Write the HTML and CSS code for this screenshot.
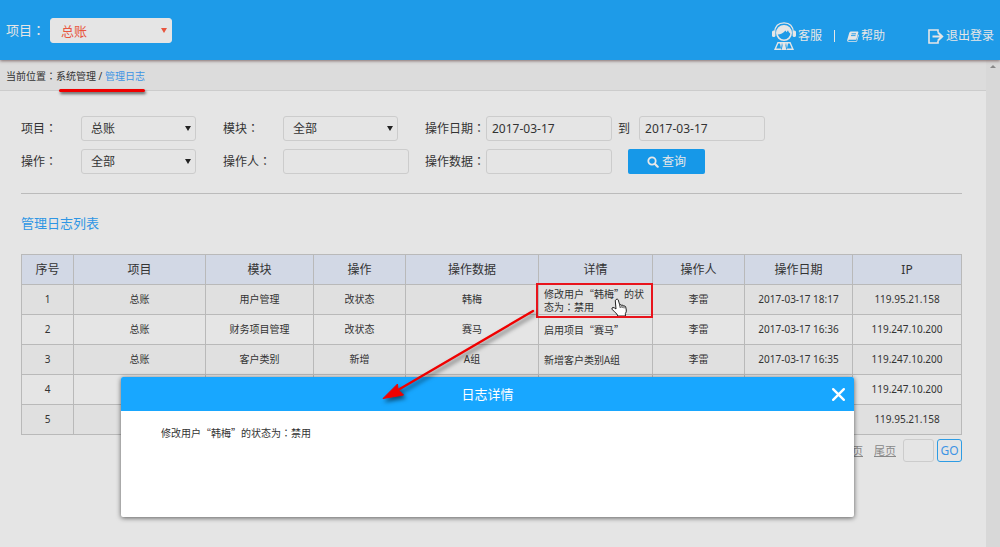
FILE: index.html
```html
<!DOCTYPE html>
<html lang="zh-CN">
<head>
<meta charset="utf-8">
<title>管理日志</title>
<link rel="stylesheet" href="styles.css">
</head>
<body>
<header class="topbar">
  <div class="project">
    <label for="top-project">项目<span class="colon" lang="zh-TW">：</span></label>
    <span class="pick pick-top"><select id="top-project"><option>总账</option></select></span>
  </div>
  <nav class="tools">
    <a href="#" class="tool">
      <svg class="agent" viewBox="0 0 24 28" aria-hidden="true">
        <path d="M2.500 10.500C3 4 7 .9 12 .9s9 3.100 9.500 9.600" fill="none" stroke="#e6e6e6" stroke-width="1.300"/>
        <circle cx="12" cy="11" r="7.200" fill="none" stroke="#e6e6e6" stroke-width="1.600"/>
        <path d="M5 12.500c3 .3 6-.8 8.500-4l1 1.800 1.500-2c.5 2 1.500 3 3.200 3.700C20 6.500 16 3.700 12 3.700S4 7.500 5 12.500z" fill="#e6e6e6"/>
        <rect x="0" y="8.500" width="3.400" height="6.500" rx="1.600" fill="#e6e6e6"/>
        <rect x="20.600" y="8.500" width="3.400" height="6.500" rx="1.600" fill="#e6e6e6"/>
        <path d="M5.500 20h13L22 28H2z" fill="#e6e6e6"/>
        <path d="M6.300 21.500h1.700l1 5H4.200zM17.700 21.500H16l-1 5h4.800zM10 20.500l.6 3-.8 4h-.9zM14 20.500l-.6 3 .8 4h.9z" fill="#1e9be8"/>
      </svg>
      <span>客服</span>
    </a>
    <span class="bar"></span>
    <a href="#" class="tool">
      <svg class="book" viewBox="0 0 12 11" aria-hidden="true">
        <path d="M3.700 .5h7.200q.7 0 .5.700L9.500 8q-.2.700-.8.700H2q-.8 0-.8.600t.7.600h7.500l1.800-6.400q.9.300.6 1.100l-1.600 5.500q-.2.700-.9.700H1.500Q0 10.800.2 9L2.200 2Q2.600.6 3.700.5z" fill="#e6e6e6"/>
        <path d="M4.500 2.800h4.500M4 4.600h4.500" stroke="#1e9be8" stroke-width=".9"/>
      </svg>
      <span>帮助</span>
    </a>
    <a href="#" class="tool tool-exit">
      <svg class="exit" viewBox="0 0 16 15" aria-hidden="true">
        <path d="M10 3.500V1H1v13h9v-2.500" fill="none" stroke="#e6e6e6" stroke-width="1.600"/>
        <path d="M4.500 7.500H14M10 3.500l4.200 4-4.200 4" fill="none" stroke="#e6e6e6" stroke-width="2"/>
      </svg>
      <span>退出登录</span>
    </a>
  </nav>
</header>

<div class="frame">
  <main class="page">
    <div class="crumbs">
      <span>当前位置<span class="colon" lang="zh-TW">：</span></span>
      <span class="trail">系统管理 / <a href="#">管理日志</a><i class="underline"></i></span>
    </div>

    <div class="content">
      <form class="filters">
        <label for="f-project">项目<span class="colon" lang="zh-TW">：</span></label>
        <span class="pick"><select id="f-project"><option>总账</option></select></span>
        <label for="f-module">模块<span class="colon" lang="zh-TW">：</span></label>
        <span class="pick"><select id="f-module"><option>全部</option></select></span>
        <label for="f-from">操作日期<span class="colon" lang="zh-TW">：</span></label>
        <div class="range">
          <input id="f-from" type="text" value="2017-03-17">
          <label class="to" for="f-to">到</label>
          <input id="f-to" type="text" value="2017-03-17">
        </div>

        <label for="f-action">操作<span class="colon" lang="zh-TW">：</span></label>
        <span class="pick"><select id="f-action"><option>全部</option></select></span>
        <label for="f-user">操作人<span class="colon" lang="zh-TW">：</span></label>
        <input id="f-user" type="text">
        <label for="f-data">操作数据<span class="colon" lang="zh-TW">：</span></label>
        <div class="range">
          <input id="f-data" type="text">
          <button type="button" class="search">
            <svg viewBox="0 0 12 12" aria-hidden="true"><circle cx="5" cy="5" r="3.700" fill="none" stroke="#e8e8e8" stroke-width="1.800"/><path d="M7.800 7.800l2.900 2.900" stroke="#e8e8e8" stroke-width="2.200" stroke-linecap="round"/></svg>
            <span>查询</span>
          </button>
        </div>
      </form>

      <h2 class="list-title">管理日志列表</h2>

      <table class="log">
        <colgroup>
          <col class="w-no"><col class="w-project"><col class="w-module"><col class="w-action"><col class="w-data"><col class="w-detail"><col class="w-user"><col class="w-date"><col class="w-ip">
        </colgroup>
        <thead>
          <tr><th>序号</th><th>项目</th><th>模块</th><th>操作</th><th>操作数据</th><th>详情</th><th>操作人</th><th>操作日期</th><th>IP</th></tr>
        </thead>
        <tbody>
          <tr>
            <td>1</td><td>总账</td><td>用户管理</td><td>改状态</td><td>韩梅</td>
            <td class="detail marked">修改用户“韩梅”的状态为<span class="colon" lang="zh-TW">：</span>禁用
              <svg class="hand" viewBox="0 0 16 19" aria-hidden="true">
                <path d="M5 1.500q1.300-1 2.200.3l1.500 5q1.400-.7 2 .5 1.500-.6 2 .6 1.500-.3 2 1l.6 3.100q.3 2-.9 3.500V18H6.800L5.900 16Q3.500 14 1 11.200q-.5-1.500 1-1.700 1.400 0 3 1.500L4.300 3q-.1-1 .7-1.500z" fill="#fff" stroke="#222" stroke-width="1"/>
                <path d="M8.700 7l.6 3M10.800 7.500l.4 2.500M12.800 8.300l.3 2" stroke="#222" stroke-width=".9"/>
              </svg>
              <svg class="arrow" viewBox="0 0 160 100" aria-hidden="true">
                <path d="M153 5L18 84" stroke="#f00000" stroke-width="2.400" stroke-linecap="round"/>
                <path d="M3 92.500L17.500 78 18 83.500 23.500 89z" fill="#f00000" stroke="#f00000" stroke-width="1"/>
              </svg>
            </td>
            <td>李雷</td><td>2017-03-17 18:17</td><td>119.95.21.158</td>
          </tr>
          <tr>
            <td>2</td><td>总账</td><td>财务项目管理</td><td>改状态</td><td>赛马</td>
            <td class="detail">启用项目“赛马”</td>
            <td>李雷</td><td>2017-03-17 16:36</td><td>119.247.10.200</td>
          </tr>
          <tr>
            <td>3</td><td>总账</td><td>客户类别</td><td>新增</td><td>A组</td>
            <td class="detail">新增客户类别A组</td>
            <td>李雷</td><td>2017-03-17 16:35</td><td>119.247.10.200</td>
          </tr>
          <tr><td>4</td><td></td><td></td><td></td><td></td><td></td><td></td><td></td><td>119.247.10.200</td></tr>
          <tr><td>5</td><td></td><td></td><td></td><td></td><td></td><td></td><td></td><td>119.95.21.158</td></tr>
        </tbody>
      </table>

      <div class="pager">
        <a href="#">下一页</a>
        <a href="#">尾页</a>
        <input type="text" aria-label="页码">
        <button type="button">GO</button>
      </div>
    </div>
  </main>
  <div class="scroll"><i></i></div>
</div>

<section class="dialog" role="dialog" aria-labelledby="dialog-title">
  <div class="dialog-head">
    <h3 id="dialog-title">日志详情</h3>
    <button type="button" aria-label="关闭"><svg viewBox="0 0 14 14" aria-hidden="true"><path d="M2 2l10 10M12 2L2 12" stroke="#fff" stroke-width="2.200" stroke-linecap="round"/></svg></button>
  </div>
  <p>修改用户“韩梅”的状态为<span class="colon" lang="zh-TW">：</span>禁用</p>
</section>
</body>
</html>
```
FILE: styles.css
```css
* { box-sizing: border-box; }
body {
  margin: 0;
  min-height: 100vh;
  display: flex;
  flex-direction: column;
  background: #e5e5e5;
  color: #333;
  font: 12px/18px "Noto Sans", "Noto Sans CJK SC", sans-serif;
}
a { color: inherit; text-decoration: none; }
svg { display: block; }
input, select, button { font: inherit; color: inherit; margin: 0; }
.colon { font-family: "Noto Sans CJK TC", sans-serif; }

.topbar {
  position: relative;
  height: 60px;
  flex: none;
  display: flex;
  justify-content: space-between;
  align-items: center;
  padding: 0 6px;
  background: #1e9be8;
  color: #e6e6e6;
  box-shadow: 0 1px 3px rgba(90, 60, 60, .7);
}
.project { display: flex; align-items: center; gap: 5px; font-size: 13px; }
.tools { display: flex; align-items: center; height: 28px; margin-top: 12px; }
.tool { display: flex; align-items: center; gap: 2px; }
.agent { width: 24px; height: 28px; }
.book { width: 12px; height: 11px; }
.exit { width: 16px; height: 15px; }
.bar { width: 1px; height: 12px; margin: 0 12px; background: #e6e6e6; }
.tool-exit { margin-left: 43px; }

.pick { position: relative; display: block; width: 115px; }
.pick::after {
  content: "";
  position: absolute;
  right: 5px;
  top: 10px;
  border: solid transparent;
  border-width: 5px 3px 0;
  border-top-color: #222;
  pointer-events: none;
}
.pick select {
  appearance: none;
  display: block;
  width: 100%;
  height: 25px;
  padding: 1px 20px 0 9px;
  border: 1px solid #ccc;
  border-radius: 3px;
  background: #e5e5e5;
}
.pick-top { width: 122px; }
.pick-top select { border-color: #e5e5e5; color: #e8553e; padding-left: 10px; }
.pick-top::after { border-top-color: #e8553e; }

.frame { flex: 1; display: flex; }
.page { flex: 1; min-width: 0; }
.scroll { width: 14px; background: #d8d8d8; padding: 5px 4px; }
.scroll i { display: block; border: solid transparent; border-width: 0 3px 3px; border-bottom-color: #888; }

.crumbs {
  display: flex;
  height: 31px;
  align-items: center;
  padding: 2px 6px 0;
  background: #dcdcdc;
  border-bottom: 1px solid #ccc;
  font-size: 10px;
}
.trail { position: relative; white-space: pre; }
.trail a { color: #3d94e4; }
.underline {
  position: absolute;
  left: 3px;
  right: 0;
  bottom: -7px;
  height: 3px;
  border-radius: 2px;
  background: #f00000;
  box-shadow: 1px 2px 3px rgba(0, 0, 0, .6);
}

.content { padding: 25px 24px 0 21px; }
.filters {
  display: grid;
  grid-template-columns: 60px 142px 60px 142px 61px 1fr;
  align-items: center;
  row-gap: 8px;
  padding-bottom: 19px;
  border-bottom: 1px solid #bbb;
}
.filters label { white-space: nowrap; }
.filters input {
  width: 126px;
  height: 25px;
  padding: 0 5px;
  border: 1px solid #ccc;
  border-radius: 3px;
  background: transparent;
}
.range { display: flex; align-items: center; }
.range .to { margin: 0 9px 0 6px; }
.search {
  display: flex;
  align-items: center;
  justify-content: center;
  gap: 3px;
  width: 77px;
  height: 25px;
  margin-left: 16px;
  padding: 1px 0 0;
  border: 0;
  border-radius: 2px;
  background: #1698e8;
  color: #e8e8e8;
}
.search svg { width: 12px; height: 12px; }

.list-title { margin: 19px 0 21px; font-size: 13px; line-height: 20px; font-weight: 400; color: #2e96e4; }

.log { width: 100%; table-layout: fixed; border-collapse: collapse; font-size: 10px; line-height: 13px; }
.log th, .log td { height: 30px; padding: 0; border: 1px solid #b9b9b9; text-align: center; }
.log th { background: #d2d8e5; font-size: 12px; font-weight: 400; }
.log tbody tr:nth-child(odd) { background: #e0e0e0; }
.log .detail { text-align: left; padding: 0 5px; font-family: "Noto Sans CJK SC", sans-serif; }
.w-no { width: 52px; }
.w-project { width: 132px; }
.w-module { width: 108px; }
.w-action { width: 92px; }
.w-data { width: 133px; }
.w-detail { width: 114px; }
.w-user { width: 92px; }
.w-date { width: 108px; }
.w-ip { width: 109px; }

.marked { position: relative; }
.marked::after { content: ""; position: absolute; inset: -2px -1px -4px -3px; border: 2px solid #e8141c; }
.hand { position: absolute; left: 72px; top: 13px; width: 16px; height: 19px; }
.arrow {
  position: absolute;
  right: 112px;
  top: 21px;
  width: 160px;
  height: 100px;
  z-index: 20;
  filter: drop-shadow(2px 3px 2px rgba(0, 0, 0, .55));
}

.pager { display: flex; justify-content: flex-end; align-items: center; margin-top: 4px; color: #888; font-size: 11px; }
.pager a { margin-right: 11px; text-decoration: underline; }
.pager a:nth-child(2) { margin-right: 7px; }
.pager input { width: 31px; height: 23px; margin-right: 3px; border: 1px solid #ccc; border-radius: 3px; background: transparent; }
.pager button { width: 25px; height: 23px; padding: 0; border: 1px solid #2e9ce4; border-radius: 3px; background: transparent; color: #3d94e4; font-size: 12px; }

.dialog {
  position: absolute;
  z-index: 10;
  left: 121px;
  right: 146px;
  top: 377px;
  min-height: 140px;
  border-radius: 2px;
  background: #fff;
  box-shadow: 0 1px 5px rgba(0, 0, 0, .6);
}
.dialog-head { position: relative; height: 34px; border-radius: 2px 2px 0 0; background: #18a7ff; color: #fff; }
.dialog h3 { margin: 0; font-size: 13px; line-height: 34px; font-weight: 400; text-align: center; }
.dialog button { position: absolute; right: 8px; top: 10px; width: 15px; height: 15px; padding: 0; border: 0; background: none; }
.dialog p { margin: 0; padding: 13px 40px; font-family: "Noto Sans CJK SC", sans-serif; font-size: 10px; }
```
